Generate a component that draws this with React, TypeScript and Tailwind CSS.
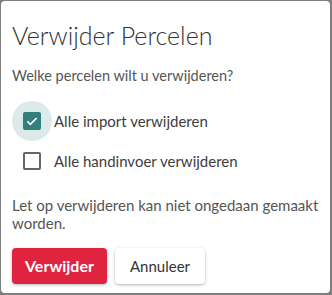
import { useState } from "react";

const options = [
    { id: "import", label: "Alle import verwijderen" },
    { id: "handinvoer", label: "Alle handinvoer verwijderen" },
];

function CheckRow({ label, checked, onToggle }: { label: string; checked: boolean; onToggle: () => void }) {
    return (
        <label className="flex h-[40px] cursor-pointer items-center" onClick={onToggle}>
            <span className="flex h-[40px] w-[40px] items-center justify-center rounded-full">
                {checked ? (
                    <span className="flex h-[40px] w-[40px] items-center justify-center rounded-full bg-[#dcebea]">
                        <span className="flex h-[18px] w-[18px] items-center justify-center rounded-[2px] bg-[#32807d]">
                            <svg viewBox="0 0 24 24" className="h-[16px] w-[16px]" fill="none" stroke="white" strokeWidth="2.6">
                                <path d="M5 12.5l4.5 4.5L19 7.5" />
                            </svg>
                        </span>
                    </span>
                ) : (
                    <span className="h-[18px] w-[18px] rounded-[2px] border-2 border-[#666666]" />
                )}
            </span>
            <span className="ml-[2px] text-[15px] text-[#3d3d3d]">{label}</span>
        </label>
    );
}

export default function App() {
    const [selected, setSelected] = useState<Record<string, boolean>>({ import: true, handinvoer: false });

    return (
        <div
            className="flex h-screen w-screen bg-[#7f7f7f] pb-[2px] pl-[1px] pr-[2px] pt-[1px]"
            style={{ fontFamily: "Lato, 'Noto Sans', sans-serif" }}
        >
            <div className="flex flex-1 flex-col rounded-[4px] bg-white px-[11px] pt-[18px]">
                <h2 className="text-[25px] leading-[32px] font-light text-[#333333]">Verwijder Percelen</h2>
                <p className="mt-[15px] text-[14.5px] leading-[20px] text-[#555555]">Welke percelen wilt u verwijderen?</p>

                <div className="mt-[15px]">
                    {options.map((o) => (
                        <CheckRow
                            key={o.id}
                            label={o.label}
                            checked={!!selected[o.id]}
                            onToggle={() => setSelected((s) => ({ ...s, [o.id]: !s[o.id] }))}
                        />
                    ))}
                </div>

                <p className="mt-[15px] text-[15px] leading-[18px] text-[#555555]">
                    Let op verwijderen kan niet ongedaan gemaakt worden.
                </p>

                <div className="mt-[16px] flex gap-[8px]">
                    <button className="h-[36px] w-[95px] rounded-[4px] bg-[#e0243f] text-[16px] font-bold text-white shadow-[0_1px_3px_rgba(0,0,0,0.3)]">
                        Verwijder
                    </button>
                    <button className="h-[36px] w-[90px] rounded-[4px] bg-white text-[15px] text-[#333333] shadow-[0_1px_3px_rgba(0,0,0,0.3)]">
                        Annuleer
                    </button>
                </div>
            </div>
        </div>
    );
}
